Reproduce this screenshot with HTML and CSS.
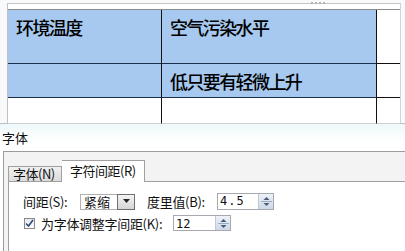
FILE: index.html
```html
<!DOCTYPE html>
<html lang="zh">
<head>
    <meta charset="UTF-8">
    <title>字符间距</title>
    <link rel="stylesheet" href="styles.css">
</head>
<body>
    <div class="doc">
        <div class="sheet">
            <span class="grip"></span>
            <div class="grid">
                <div class="cell sel">环境温度</div>
                <div class="cell sel">空气污染水平</div>
                <div class="cell last"></div>

                <div class="cell sel">&nbsp;</div>
                <div class="cell sel">低只要有轻微上升</div>
                <div class="cell last"></div>

                <div class="cell low"></div>
                <div class="cell low"></div>
                <div class="cell last low"></div>
            </div>
        </div>
    </div>

    <div class="lower">
        <div class="title">字体</div>
        <div class="dialog">
            <div class="tabs">
                <div class="tab">字体(N)</div>
                <div class="tab active">字符间距(R)</div>
            </div>
            <div class="panel">
                <div class="row">
                    <span class="lbl lbl-gap">间距(S):</span>
                    <div class="combo">
                        <span class="combo-val">紧缩</span>
                        <span class="combo-btn">
                            <svg width="9" height="5" viewBox="0 0 9 5"><path d="M1 0 L8 0 L4.5 4 Z" fill="#222"/></svg>
                        </span>
                    </div>
                    <span class="lbl lbl-val">度里值(B):</span>
                    <div class="spin spin-wide">
                        <span class="spin-val">4.5</span>
                        <span class="spin-btn">
                            <svg width="13" height="15" viewBox="0 0 13 15">
                                <path d="M3.5 6 L6.5 3 L9.5 6 Z" fill="#4a5a78"/>
                                <line x1="1" y1="7.5" x2="12" y2="7.5" stroke="#9aaac0"/>
                                <path d="M3.5 9 L6.5 12 L9.5 9 Z" fill="#4a5a78"/>
                            </svg>
                        </span>
                    </div>
                </div>
                <div class="row">
                    <span class="check">
                        <svg width="9" height="9" viewBox="0 0 9 9"><path d="M1 4.5 L3.5 7 L8 1" fill="none" stroke="#2a4a80" stroke-width="1.6"/></svg>
                    </span>
                    <span class="lbl lbl-kern">为字体调整字间距(K):</span>
                    <div class="spin spin-small">
                        <span class="spin-val">12</span>
                        <span class="spin-btn">
                            <svg width="13" height="13" viewBox="0 0 13 13">
                                <path d="M3.5 5 L6.5 2 L9.5 5 Z" fill="#4a5a78"/>
                                <line x1="1" y1="6.5" x2="12" y2="6.5" stroke="#9aaac0"/>
                                <path d="M3.5 8 L6.5 11 L9.5 8 Z" fill="#4a5a78"/>
                            </svg>
                        </span>
                    </div>
                </div>
            </div>
        </div>
    </div>
</body>
</html>
```

FILE: styles.css
```css
* {
    margin: 0;
    padding: 0;
    box-sizing: border-box;
}

body {
    width: 405px;
    height: 251px;
    overflow: hidden;
    background: #fff;
    font-family: "Noto Sans CJK SC", "Liberation Sans", sans-serif;
    color: #111;
}

.doc {
    height: 124px;
    padding: 3px 4px 0 7px;
    background: #f7f9fb;
    border-bottom: 1px solid #b8c0c8;
}

.sheet {
    position: relative;
    height: 120px;
    padding-top: 5px;
    background: #fff;
    border-top: 1px solid #c6c6c6;
    border-left: 1px solid #c0c0c0;
    border-right: 1px solid #d4d4d4;
}

/* little drag handle on the page edge */
.grip {
    position: absolute;
    top: -2px;
    left: 303px;
    width: 14px;
    border-top: 2px dotted #b4b4b4;
}

.grid {
    display: grid;
    grid-template-columns: 154px 215px 1fr;
    grid-template-rows: 54px 34px 26px;
    border-top: 1px solid #8c8c8c;
}

.cell {
    border-right: 1px solid #111;
    border-bottom: 1px solid #111;
    font-size: 18px;
    font-weight: 500;
    line-height: 20px;
    letter-spacing: -1.6px;
    color: #000;
    white-space: nowrap;
    padding: 7px 0 0 8px;
    background: #fff;
}

.cell.sel {
    background: #a7c9ef;
    border-bottom-color: #1c2f4a;
}

.cell.last {
    border-right: 0;
    background: #fff;
}

.cell.low {
    border-bottom-color: #cfcfcf;
}

.lower {
    height: 126px;
    background: linear-gradient(#eef8fa, #fff 18px);
}

.title {
    font-size: 13px;
    line-height: 14px;
    padding: 7px 0 0 2px;
    height: 27px;
}

.dialog {
    margin-left: 3px;
    height: 100px;
    border-top: 1px solid #9c9c9c;
    border-left: 1px solid #9c9c9c;
    background: #f3f3f3;
    padding: 7px 0 0 4px;
}

.tabs {
    display: flex;
    align-items: flex-end;
    height: 22px;
}

.tab {
    font-size: 13px;
    line-height: 14px;
    height: 15px;
    padding: 0 4px;
    width: 54px;
    border: 1px solid #a0a0a0;
    border-bottom: 0;
    background: linear-gradient(#f0f0f0, #dcdcdc);
    white-space: nowrap;
    letter-spacing: -0.5px;
}

.tab.active {
    width: 83px;
    height: 22px;
    padding: 3px 0 0 8px;
    background: #fff;
    border-left: 0;
    margin-bottom: -1px;
    position: relative;
}

.panel {
    height: 70px;
    background: #fff;
    border-top: 1px solid #a0a0a0;
    border-left: 1px solid #a0a0a0;
    padding: 11px 0 0 14px;
}

.row {
    display: flex;
    align-items: center;
    font-size: 13px;
    line-height: 15px;
}

.row + .row {
    margin-top: 5px;
}

.lbl {
    white-space: nowrap;
    letter-spacing: -0.3px;
}

.lbl-gap {
    width: 57px;
}

.lbl-val {
    width: 70px;
}

.lbl-kern {
    width: 132px;
}

.combo {
    display: flex;
    width: 55px;
    height: 16px;
    margin-right: 12px;
    border: 1px solid #b0b0b0;
}

.combo-val {
    flex: 1;
    padding-left: 3px;
    line-height: 14px;
}

.combo-btn {
    width: 18px;
    display: flex;
    align-items: center;
    justify-content: center;
    background: linear-gradient(#f4f4f4, #d6d6d6);
    border: 1px solid #707070;
    margin: -1px;
}

.spin {
    display: flex;
    border: 1px solid #a8a8b0;
    height: 17px;
    font-family: "DejaVu Sans Mono", monospace;
    font-size: 12px;
}

.spin-wide {
    width: 57px;
}

.spin-small {
    width: 58px;
    height: 16px;
}

.spin-val {
    flex: 1;
    padding-left: 2px;
    line-height: 15px;
    letter-spacing: 1px;
}

.spin-small .spin-val {
    letter-spacing: 0;
    padding-top: 1px;
}

.spin-btn {
    width: 15px;
    display: flex;
    align-items: center;
    justify-content: center;
    background: linear-gradient(#eef2f8, #cdd8e6);
    border-left: 1px solid #c0c8d4;
}

.check {
    width: 11px;
    height: 11px;
    border: 1px solid #8a8a8a;
    background: linear-gradient(#e4e8ee, #fff);
    display: flex;
    align-items: center;
    justify-content: center;
    margin: 0 6px 0 1px;
}
```
